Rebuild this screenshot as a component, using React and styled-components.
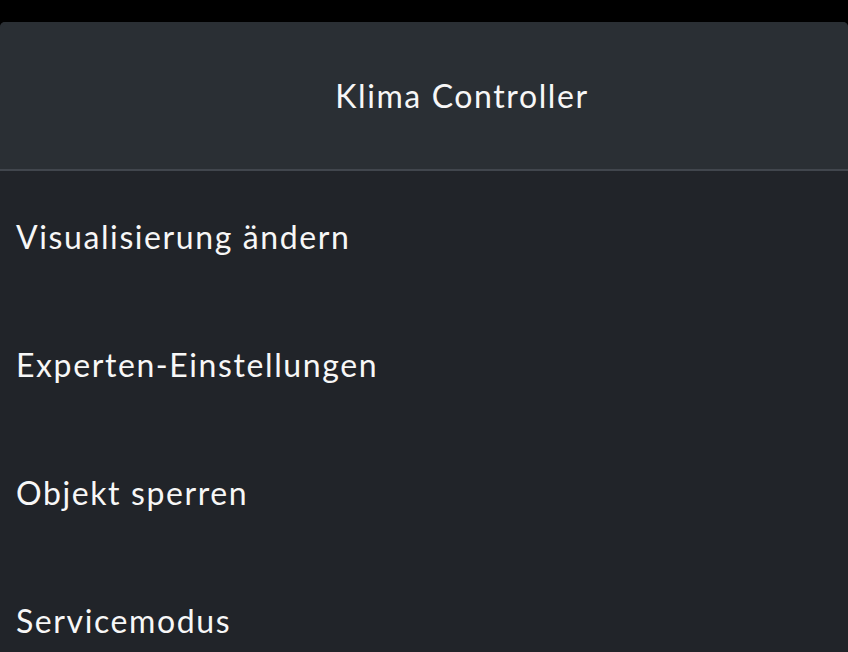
import React from 'react';
import styled, { createGlobalStyle } from 'styled-components';

const Global = createGlobalStyle`
    html, body {
        margin: 0;
        padding: 0;
        background: #000;
        height: 100%;
        overflow: hidden;
    }
    #root {
        height: 100%;
    }
`;

const Screen = styled.div`
    height: 100%;
    padding-top: 22px;
    box-sizing: border-box;
    background: #000;
    font-family: "Lato", "Noto Sans", sans-serif;
    color: #f7f7f7;
    letter-spacing: 1.6px;
`;

const Panel = styled.div`
    height: 100%;
    background: #212429;
    border-radius: 5px 5px 0 0;
    overflow: hidden;
    display: flex;
    flex-direction: column;
`;

const Header = styled.header`
    height: 147px;
    flex-shrink: 0;
    background: #2a2f34;
    border-bottom: 2px solid #41464d;
    display: flex;
    align-items: center;
    justify-content: center;
    padding-left: 76px;
    font-size: 32px;
    font-weight: 400;
`;

const List = styled.ul`
    list-style: none;
    margin: 0;
    padding: 1px 0 0;
`;

const Item = styled.li`
    height: 128px;
    display: flex;
    align-items: center;
    padding-left: 16px;
    font-size: 32px;
`;

const items = [
    'Visualisierung ändern',
    'Experten-Einstellungen',
    'Objekt sperren',
    'Servicemodus',
];

export default function App() {
    return (
        <Screen>
            <Global />
            <Panel>
                <Header>Klima Controller</Header>
                <List>
                    {items.map(label => (
                        <Item key={label}>{label}</Item>
                    ))}
                </List>
            </Panel>
        </Screen>
    );
}
